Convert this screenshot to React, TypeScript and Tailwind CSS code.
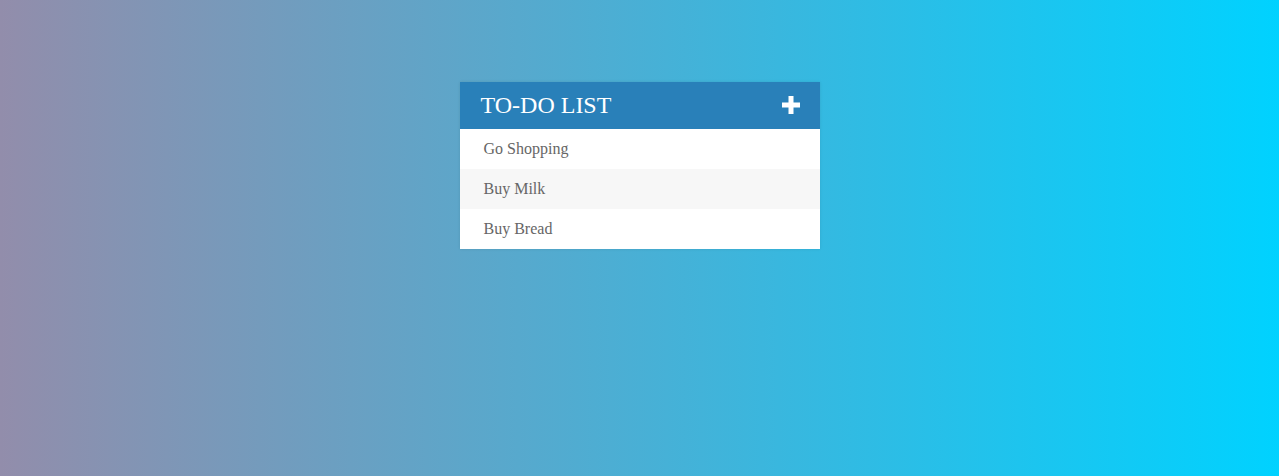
import { useState } from "react";

export default function App() {
  const [todos] = useState(["Go Shopping", "Buy Milk", "Buy Bread"]);

  return (
    <div className="min-h-screen h-[476px] bg-[linear-gradient(to_right,#928dab,#00d2ff)] pt-[82px] font-['Liberation_Serif',serif]">
      <div className="mx-auto w-[360px] bg-white shadow-[0_0_3px_rgba(0,0,0,0.1)]">
        <div className="flex h-[47px] items-center justify-between bg-[#2980b9] pl-[21px] pr-[19px]">
          <h1 className="mt-[-2px] text-[24px] font-normal leading-none text-white">TO-DO LIST</h1>
          <svg width="20" height="20" viewBox="0 0 20 20" className="mt-[-1px]">
            <path d="M7.5 1h5v6.5H19v5h-6.5V19h-5v-6.5H1v-5h6.5z" fill="white" />
          </svg>
        </div>
        <ul>
          {todos.map((todo, i) => (
            <li
              key={todo}
              className={`flex h-10 items-center pl-6 text-[16px] text-[#666] ${i % 2 === 1 ? "bg-[#f7f7f7]" : "bg-white"}`}
            >
              {todo}
            </li>
          ))}
        </ul>
      </div>
    </div>
  );
}
